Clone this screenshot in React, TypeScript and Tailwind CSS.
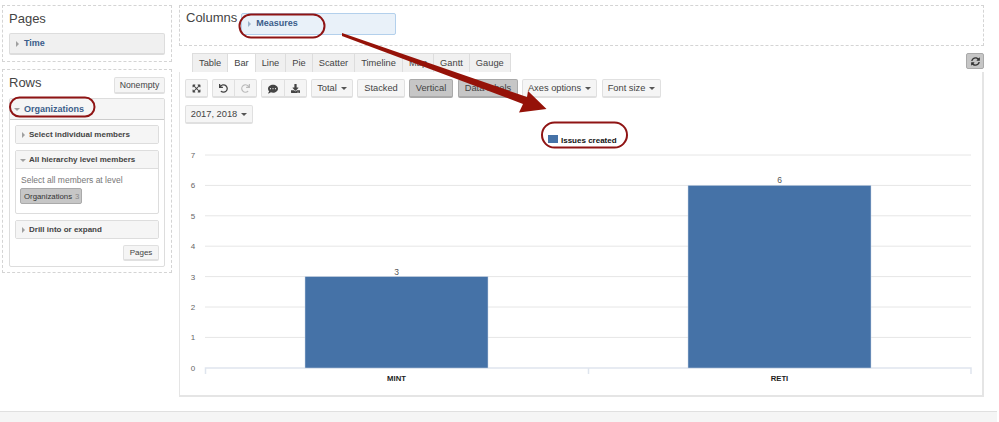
import { FaCommentDots, FaDownload, FaExpandArrowsAlt, FaRedo, FaSyncAlt, FaUndo } from "react-icons/fa";

const tabs = ["Table", "Bar", "Line", "Pie", "Scatter", "Timeline", "Map", "Gantt", "Gauge"];
const ticks = [7, 6, 5, 4, 3, 2, 1, 0];

function Caret() {
  return <span className="ml-[4px] inline-block h-0 w-0 border-x-[3px] border-t-[3px] border-x-transparent border-t-[#555] align-middle" />;
}

function Tri({ open = false, color = "#a0a0a0" }: { open?: boolean; color?: string }) {
  return (
    <span className="flex w-[6px] shrink-0 justify-center">
      {open ? (
        <span className="h-0 w-0 border-x-[3px] border-t-[3px] border-x-transparent" style={{ borderTopColor: color }} />
      ) : (
        <span className="h-0 w-0 border-y-[3px] border-l-[3px] border-y-transparent" style={{ borderLeftColor: color }} />
      )}
    </span>
  );
}

function Btn({ children, active = false, className = "" }: { children: React.ReactNode; active?: boolean; className?: string }) {
  return (
    <div
      className={`flex shrink-0 items-center justify-center whitespace-nowrap rounded-[2px] border border-b-2 pt-[1px] ${
        active ? "border-[#aaa] bg-[#c6c6c6] text-[#444]" : "border-[#e0e0e0] bg-[#f5f5f5] text-[#444]"
      } ${className}`}
    >
      {children}
    </div>
  );
}

function SubHeader({ label, open = false }: { label: string; open?: boolean }) {
  return (
    <div className="flex h-[17px] items-center gap-[3px] bg-[#f5f5f5] pl-[4px] pt-[1px] text-[8px] font-bold text-[#444]">
      <Tri open={open} />
      {label}
    </div>
  );
}

function Chart() {
  const y = (v: number) => 155 + (7 - v) * 30.4;
  return (
    <svg width={999} height={422} className="absolute left-0 top-0" style={{ fontFamily: '"Liberation Sans", Arial, sans-serif' }}>
      {ticks.map((t) => (
        <g key={t}>
          {t > 0 && <line x1={205} x2={971} y1={y(t)} y2={y(t)} stroke="#e6e6e6" />}
          <text x={193} y={y(t) + 3} fontSize={8} fill="#666" textAnchor="middle">
            {t}
          </text>
        </g>
      ))}
      <path d="M205.5 374V368H588.5V374M588.5 368H971V374" fill="none" stroke="#dfe5ee" strokeWidth={1.5} />
      <rect x={305} y={y(3)} width={183} height={368 - y(3)} fill="#4572a7" stroke="#c9d6e6" strokeWidth={0.5} />
      <rect x={688} y={y(6)} width={183} height={368 - y(6)} fill="#4572a7" stroke="#c9d6e6" strokeWidth={0.5} />
      <text x={396.5} y={y(3) - 2} fontSize={8.5} fill="#555" textAnchor="middle">3</text>
      <text x={779.5} y={y(6) - 2} fontSize={8.5} fill="#555" textAnchor="middle">6</text>
      <text x={396.5} y={380.5} fontSize={7.7} fontWeight={700} fill="#222" textAnchor="middle">MINT</text>
      <text x={779.5} y={380.5} fontSize={7.7} fontWeight={700} fill="#222" textAnchor="middle">RETI</text>
      <rect x={548} y={135} width={10} height={8} fill="#4572a7" />
      <text x={561} y={143} fontSize={8} fontWeight={700} fill="#111">Issues created</text>
    </svg>
  );
}

function Annotations() {
  return (
    <svg width={999} height={422} className="pointer-events-none absolute left-0 top-0">
      <rect x={10} y={97.5} width={84.5} height={19} rx={9.5} fill="none" stroke="#8f1414" strokeWidth={2} />
      <rect x={239.5} y={14.5} width={85} height={23} rx={11.5} fill="none" stroke="#8f1414" strokeWidth={2} />
      <rect x={542} y={122.5} width={85} height={25} rx={12.5} fill="none" stroke="#8f1414" strokeWidth={2} />
      <path d="M342 33L527 97L528 91L546.5 109L519 112.5L523 104L342 36Z" fill="#951208" />
    </svg>
  );
}

export default function App() {
  return (
    <div className="relative h-[422px] w-[999px] overflow-hidden bg-white font-['Liberation_Sans',Arial,sans-serif]">
      <div className="flex h-[411px] pl-[2px] pt-[5px]">
        {/* left column */}
        <div className="flex w-[170px] shrink-0 flex-col gap-[7px]">
          <div className="h-[57px] border border-dashed border-[#d4d4d4] px-[6px] pt-[3px]">
            <div className="text-[13px] leading-[20px] text-[#444]">Pages</div>
            <div className="mt-[4px] flex h-[22px] items-center gap-[4px] rounded-[2px] border border-b-2 border-[#ddd] bg-[#f0f0f0] pl-[4px] pt-[1px] text-[9px] font-bold text-[#3b5d8a]">
              <Tri />
              Time
            </div>
          </div>
          <div className="h-[204px] border border-dashed border-[#d4d4d4] px-[6px] pt-[3px]">
            <div className="flex h-[21px] items-start justify-between">
              <div className="text-[13px] leading-[20px] text-[#444]">Rows</div>
              <Btn className="mt-[4px] h-[17px] w-[51px] text-[8.7px]">Nonempty</Btn>
            </div>
            <div className="mt-[4px] h-[169px] rounded-[2px] border border-[#ddd]">
              <div className="flex h-[21px] items-center gap-[4px] border-b border-[#ccc] bg-[#f5f5f5] pl-[4px] pt-[1px] text-[9px] font-bold text-[#3b5d8a]">
                <Tri open />
                Organizations
              </div>
              <div className="flex flex-col gap-[6px] px-[5px] pt-[5px]">
                <div className="rounded-[2px] border border-[#ddd]">
                  <SubHeader label="Select individual members" />
                </div>
                <div className="h-[64px] rounded-[2px] border border-[#ddd]">
                  <div className="border-b border-[#ddd]">
                    <SubHeader label="All hierarchy level members" open />
                  </div>
                  <div className="px-[5px] pt-[5px] text-[8.5px] leading-[12px] text-[#777]">Select all members at level</div>
                  <div className="ml-[4px] mt-[2px] flex h-[16px] w-[62px] items-center whitespace-nowrap rounded-[2px] border border-[#aaa] bg-[#c6c6c6] pl-[3px] pt-[1px] text-[7.8px] text-[#333]">
                    Organizations<span className="ml-[3px] text-[#888]">3</span>
                  </div>
                </div>
                <div className="rounded-[2px] border border-[#ddd]">
                  <SubHeader label="Drill into or expand" />
                </div>
                <div className="flex justify-end">
                  <Btn className="h-[16px] w-[36px] text-[8px]">Pages</Btn>
                </div>
              </div>
            </div>
          </div>
        </div>

        {/* right column */}
        <div className="ml-[7px] flex w-[805px] shrink-0 flex-col">
          <div className="flex h-[41px] items-start gap-[4px] border border-dashed border-[#d4d4d4] pl-[6px] pt-[2px]">
            <div className="text-[13px] leading-[20px] text-[#444]">Columns</div>
            <div className="mt-[5px] flex h-[22px] w-[155px] items-center gap-[4px] rounded-[2px] border border-[#b3d0ec] bg-[#e9f1f9] pl-[4px] text-[9px] font-bold text-[#3b5d8a]">
              <Tri color="#9db4cc" />
              Measures
            </div>
          </div>
          <div className="mt-[7px] flex h-[19px] items-start justify-between pl-[13px]">
            <div className="flex h-[19px]">
              {tabs.map((t) => (
                <div
                  key={t}
                  className={`-ml-px flex h-[19px] items-center border border-b-0 border-[#ddd] px-[6px] pt-[1px] text-[9.3px] text-[#444] first:ml-0 ${t === "Bar" ? "bg-white" : "bg-[#f0f0f0]"}`}
                >
                  {t}
                </div>
              ))}
            </div>
            <div className="flex h-[16px] w-[18px] items-center justify-center rounded-[2px] border border-[#aaa] bg-[#c6c6c6] text-[#333]">
              <FaSyncAlt size={9} />
            </div>
          </div>
          <div className="h-[325px] border border-b-2 border-r-2 border-t-0 border-[#e5e5e5]">
            <div className="flex gap-[4px] pl-[5px] pt-[7px] text-[9.3px]">
              <Btn className="h-[19px] w-[23px]"><FaExpandArrowsAlt size={9} /></Btn>
              <div className="flex">
                <Btn className="h-[19px] w-[23px] rounded-r-none"><FaUndo size={9} /></Btn>
                <Btn className="-ml-px h-[19px] w-[23px] rounded-l-none !text-[#bbb]"><FaRedo size={9} /></Btn>
              </div>
              <div className="flex">
                <Btn className="h-[19px] w-[24px] rounded-r-none"><FaCommentDots size={10} /></Btn>
                <Btn className="-ml-px h-[19px] w-[23px] rounded-l-none"><FaDownload size={9} /></Btn>
              </div>
              <Btn className="h-[19px] w-[42px]">Total<Caret /></Btn>
              <Btn className="h-[19px] w-[48px]">Stacked</Btn>
              <Btn active className="h-[19px] w-[44px]">Vertical</Btn>
              <Btn active className="ml-[1px] h-[19px] w-[60px]">Data labels</Btn>
              <Btn className="h-[19px] w-[75px]">Axes options<Caret /></Btn>
              <Btn className="ml-[1px] h-[19px] w-[59px]">Font size<Caret /></Btn>
            </div>
            <div className="pl-[5px] pt-[7px] text-[9.3px]">
              <Btn className="h-[19px] w-[68px]">2017, 2018<Caret /></Btn>
            </div>
          </div>
        </div>
      </div>
      <div className="h-[11px] w-[997px] border-t border-[#e0e0e0] bg-[#f5f5f5]" />
      <Chart />
      <Annotations />
    </div>
  );
}
